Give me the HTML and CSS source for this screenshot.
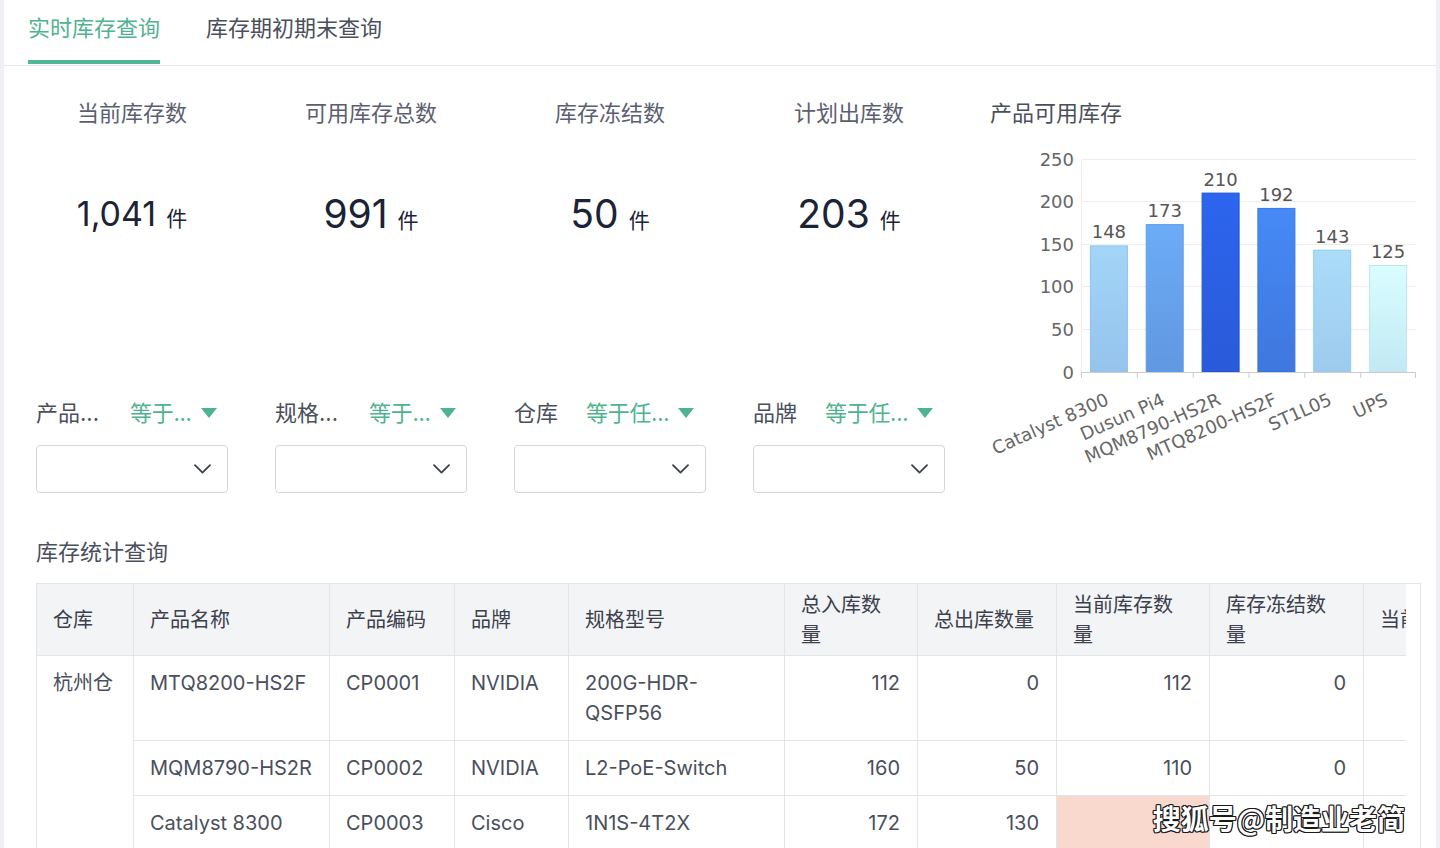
FILE: index.html
```html
<!DOCTYPE html>
<html lang="zh-CN">
<head>
<meta charset="utf-8">
<title>实时库存查询</title>
<link rel="stylesheet" href="styles.css">
</head>
<body>
<div class="page">
  <div class="tabs">
    <div class="tab active">实时库存查询</div>
    <div class="tab">库存期初期末查询</div>
  </div>
  <div class="content">
    <div class="top">
      <div class="left">
        <div class="grid4 kpis">
          <div class="kpi"><div class="kpi-label">当前库存数</div><div class="kpi-value small">1,041<span class="unit">件</span></div></div>
          <div class="kpi"><div class="kpi-label">可用库存总数</div><div class="kpi-value">991<span class="unit">件</span></div></div>
          <div class="kpi"><div class="kpi-label">库存冻结数</div><div class="kpi-value">50<span class="unit">件</span></div></div>
          <div class="kpi"><div class="kpi-label">计划出库数</div><div class="kpi-value">203<span class="unit">件</span></div></div>
        </div>
        <div class="grid4 filters">
          <div class="filter">
            <div class="fhead"><span class="fname">产品...</span><span class="fop">等于...</span><svg class="tri" width="16" height="10" viewBox="0 0 16 10"><path d="M0 0H16L8 10Z" fill="#4fb38f"/></svg></div>
            <div class="select"><svg width="17" height="10" viewBox="0 0 17 10"><path d="M1 1.2L8.5 8.6L16 1.2" fill="none" stroke="#3c4150" stroke-width="1.8" stroke-linecap="round" stroke-linejoin="round"/></svg></div>
          </div>
          <div class="filter">
            <div class="fhead"><span class="fname">规格...</span><span class="fop">等于...</span><svg class="tri" width="16" height="10" viewBox="0 0 16 10"><path d="M0 0H16L8 10Z" fill="#4fb38f"/></svg></div>
            <div class="select"><svg width="17" height="10" viewBox="0 0 17 10"><path d="M1 1.2L8.5 8.6L16 1.2" fill="none" stroke="#3c4150" stroke-width="1.8" stroke-linecap="round" stroke-linejoin="round"/></svg></div>
          </div>
          <div class="filter">
            <div class="fhead"><span class="fname short">仓库</span><span class="fop">等于任...</span><svg class="tri" width="16" height="10" viewBox="0 0 16 10"><path d="M0 0H16L8 10Z" fill="#4fb38f"/></svg></div>
            <div class="select"><svg width="17" height="10" viewBox="0 0 17 10"><path d="M1 1.2L8.5 8.6L16 1.2" fill="none" stroke="#3c4150" stroke-width="1.8" stroke-linecap="round" stroke-linejoin="round"/></svg></div>
          </div>
          <div class="filter">
            <div class="fhead"><span class="fname short">品牌</span><span class="fop">等于任...</span><svg class="tri" width="16" height="10" viewBox="0 0 16 10"><path d="M0 0H16L8 10Z" fill="#4fb38f"/></svg></div>
            <div class="select"><svg width="17" height="10" viewBox="0 0 17 10"><path d="M1 1.2L8.5 8.6L16 1.2" fill="none" stroke="#3c4150" stroke-width="1.8" stroke-linecap="round" stroke-linejoin="round"/></svg></div>
          </div>
        </div>
      </div>
      <div class="chart">
        <div class="chart-title">产品可用库存</div>
        <svg class="chart-svg" width="430" height="340" viewBox="0 0 430 340">
          <defs>
            <linearGradient id="g1" x1="0" y1="0" x2="0" y2="1"><stop offset="0" stop-color="#a3d5f8"/><stop offset="1" stop-color="#95c3ec"/></linearGradient>
            <linearGradient id="g2" x1="0" y1="0" x2="0" y2="1"><stop offset="0" stop-color="#6cabf7"/><stop offset="1" stop-color="#6198e0"/></linearGradient>
            <linearGradient id="g3" x1="0" y1="0" x2="0" y2="1"><stop offset="0" stop-color="#2c65ef"/><stop offset="1" stop-color="#2a5ad8"/></linearGradient>
            <linearGradient id="g4" x1="0" y1="0" x2="0" y2="1"><stop offset="0" stop-color="#468af6"/><stop offset="1" stop-color="#3f77dd"/></linearGradient>
            <linearGradient id="g5" x1="0" y1="0" x2="0" y2="1"><stop offset="0" stop-color="#abdcf9"/><stop offset="1" stop-color="#9dcbee"/></linearGradient>
            <linearGradient id="g6" x1="0" y1="0" x2="0" y2="1"><stop offset="0" stop-color="#d9fdff"/><stop offset="1" stop-color="#c2e9f4"/></linearGradient>
          </defs>
          <g stroke="#ededed" stroke-width="1">
            <line x1="91" y1="19.5" x2="426" y2="19.5"/>
            <line x1="91" y1="61.5" x2="426" y2="61.5"/>
            <line x1="91" y1="104.5" x2="426" y2="104.5"/>
            <line x1="91" y1="146.5" x2="426" y2="146.5"/>
            <line x1="91" y1="189.5" x2="426" y2="189.5"/>
            <line x1="91.5" y1="19" x2="91.5" y2="232"/>
          </g>
          <g class="ylab" text-anchor="end">
            <text x="84" y="25.5">250</text>
            <text x="84" y="68">200</text>
            <text x="84" y="110.7">150</text>
            <text x="84" y="153.3">100</text>
            <text x="84" y="196">50</text>
            <text x="84" y="238.5">0</text>
          </g>
          <rect x="100.4" y="105.9" width="37" height="126.1" fill="url(#g1)" stroke="#8cc3f0" stroke-width="1"/>
          <rect x="156.2" y="84.6" width="37" height="147.4" fill="url(#g2)" stroke="#5b9cf0" stroke-width="1"/>
          <rect x="212.1" y="53.1" width="37" height="178.9" fill="url(#g3)" stroke="#1f52de" stroke-width="1"/>
          <rect x="267.9" y="68.4" width="37" height="163.6" fill="url(#g4)" stroke="#3577e8" stroke-width="1"/>
          <rect x="323.7" y="110.2" width="37" height="121.8" fill="url(#g5)" stroke="#92cbf0" stroke-width="1"/>
          <rect x="379.6" y="125.5" width="37" height="106.5" fill="url(#g6)" stroke="#bde6f2" stroke-width="1"/>
          <g stroke="#cccccc" stroke-width="1">
            <line x1="91" y1="232.5" x2="426" y2="232.5"/>
            <line x1="91.5" y1="232" x2="91.5" y2="238"/>
            <line x1="147.3" y1="232" x2="147.3" y2="238"/>
            <line x1="203.2" y1="232" x2="203.2" y2="238"/>
            <line x1="259" y1="232" x2="259" y2="238"/>
            <line x1="314.8" y1="232" x2="314.8" y2="238"/>
            <line x1="370.7" y1="232" x2="370.7" y2="238"/>
            <line x1="425.5" y1="232" x2="425.5" y2="238"/>
          </g>
          <g class="vlab" text-anchor="middle">
            <text x="118.9" y="98.4">148</text>
            <text x="174.7" y="77.1">173</text>
            <text x="230.6" y="45.6">210</text>
            <text x="286.4" y="60.9">192</text>
            <text x="342.2" y="102.7">143</text>
            <text x="398.1" y="118">125</text>
          </g>
          <g class="xlab" text-anchor="end">
            <text transform="translate(120,264) rotate(-24)">Catalyst 8300</text>
            <text transform="translate(176,264) rotate(-24)">Dusun Pi4</text>
            <text transform="translate(232,264) rotate(-24)">MQM8790-HS2R</text>
            <text transform="translate(288,264) rotate(-24)">MTQ8200-HS2F</text>
            <text transform="translate(343,264) rotate(-24)">ST1L05</text>
            <text transform="translate(399,264) rotate(-24)">UPS</text>
          </g>
        </svg>
      </div>
    </div>
    <div class="section-title">库存统计查询</div>
    <div class="table-wrap">
      <div class="table-clip">
        <table class="stock">
          <thead>
            <tr>
              <th class="c1">仓库</th>
              <th class="c2">产品名称</th>
              <th class="c3">产品编码</th>
              <th class="c4">品牌</th>
              <th class="c5">规格型号</th>
              <th class="c6">总入库数量</th>
              <th class="c7">总出库数量</th>
              <th class="c8">当前库存数量</th>
              <th class="c9">库存冻结数量</th>
              <th class="c10">当前可用库存</th>
            </tr>
          </thead>
          <tbody>
            <tr>
              <td rowspan="3">杭州仓</td>
              <td>MTQ8200-HS2F</td>
              <td>CP0001</td>
              <td>NVIDIA</td>
              <td>200G-HDR-<br>QSFP56</td>
              <td class="num">112</td>
              <td class="num">0</td>
              <td class="num">112</td>
              <td class="num">0</td>
              <td class="num"></td>
            </tr>
            <tr>
              <td>MQM8790-HS2R</td>
              <td>CP0002</td>
              <td>NVIDIA</td>
              <td>L2-PoE-Switch</td>
              <td class="num">160</td>
              <td class="num">50</td>
              <td class="num">110</td>
              <td class="num">0</td>
              <td class="num"></td>
            </tr>
            <tr>
              <td>Catalyst 8300</td>
              <td>CP0003</td>
              <td>Cisco</td>
              <td>1N1S-4T2X</td>
              <td class="num">172</td>
              <td class="num">130</td>
              <td class="num hot"></td>
              <td class="num"></td>
              <td class="num"></td>
            </tr>
          </tbody>
        </table>
      </div>
    </div>
  </div>
  <div class="watermark">搜狐号@制造业老简</div>
</div>
</body>
</html>
```

FILE: styles.css
```css
html, body {
  margin: 0;
  padding: 0;
  height: 848px;
  overflow: hidden;
}

body {
  background: #f0f0f5;
  font-family: Inter, "Noto Sans CJK SC", sans-serif;
  color: #4a4f5c;
}

.page {
  position: relative;
  margin: 0 4px;
  height: 848px;
  background: #ffffff;
  overflow: hidden;
}

/* Tabs */
.tabs {
  display: flex;
  gap: 46px;
  padding-left: 24px;
  height: 65px;
  border-bottom: 1px solid #e7e8ec;
}

.tab {
  box-sizing: border-box;
  height: 64px;
  padding-top: 13px;
  font-size: 22px;
  line-height: 30px;
  color: #4a4f5c;
  border-bottom: 4px solid transparent;
}

.tab.active {
  color: #4fb38f;
  border-bottom-color: #52b594;
}

/* Content */
.content {
  padding: 0 15px 0 32px;
}

.top {
  display: flex;
  margin-top: 32px;
}

.left {
  width: 909px;
}

.grid4 {
  display: grid;
  grid-template-columns: repeat(4, 192px);
  column-gap: 47px;
}

.kpi {
  text-align: center;
}

.kpi-label {
  font-size: 22px;
  line-height: 30px;
  color: #5b6070;
}

.kpi-value {
  margin-top: 62px;
  font-size: 39px;
  line-height: 48px;
  color: #1b2336;
}

.kpi-value.small {
  font-size: 34px;
}

.unit {
  font-size: 21px;
  margin-left: 10px;
}

.filters {
  margin-top: 153px;
}

.fhead {
  display: flex;
  align-items: center;
  font-size: 22px;
  line-height: 30px;
  white-space: nowrap;
}

.fname {
  width: 94px;
  color: #4a4f5c;
}

.fname.short {
  width: 72px;
}

.fop {
  color: #4fb38f;
  letter-spacing: -0.3px;
}

.tri {
  margin-left: 9px;
}

.select {
  box-sizing: border-box;
  margin-top: 17px;
  height: 48px;
  border: 1px solid #d3d6dc;
  border-radius: 4px;
  display: flex;
  align-items: center;
  justify-content: flex-end;
  padding-right: 16px;
}

.select svg {
  display: block;
}

/* Chart */
.chart {
  margin-left: 45px;
  width: 430px;
}

.chart-title {
  font-size: 22px;
  line-height: 30px;
  color: #4a4f5c;
}

.chart-svg {
  display: block;
  margin-top: 12px;
  font-family: "DejaVu Sans", Verdana, sans-serif;
}

.ylab text {
  font-size: 18px;
  fill: #666666;
}

.vlab text {
  font-size: 18px;
  fill: #555555;
}

.xlab text {
  font-size: 18px;
  fill: #666666;
}

/* Table */
.section-title {
  margin-top: 44px;
  font-size: 22px;
  line-height: 30px;
  color: #4a4f5c;
}

.table-wrap {
  margin-top: 16px;
  border: 1px solid #e2e4e8;
  border-bottom: 0;
  padding-right: 14px;
}

.table-clip {
  overflow: hidden;
}

.stock {
  border-collapse: separate;
  border-spacing: 0;
  table-layout: fixed;
  width: 1507px;
  font-size: 20px;
  line-height: 30px;
  color: #4a4f5c;
}

.stock th,
.stock td {
  box-sizing: border-box;
  border-right: 1px solid #e2e4e8;
  border-bottom: 1px solid #e2e4e8;
  padding: 12px 16px;
  text-align: left;
  vertical-align: top;
  font-weight: normal;
}

.stock th {
  background: #f3f4f6;
  padding: 5px 20px 5px 16px;
  vertical-align: middle;
  color: #3b404c;
  height: 72px;
}

.stock .c1 { width: 97px; }
.stock .c2 { width: 196px; }
.stock .c3 { width: 125px; }
.stock .c4 { width: 114px; }
.stock .c5 { width: 216px; }
.stock .c6 { width: 133px; }
.stock .c7 { width: 139px; }
.stock .c8 { width: 153px; }
.stock .c9 { width: 154px; }
.stock .c10 { width: 180px; white-space: nowrap; }

.stock td.num {
  text-align: right;
  padding-right: 17px;
}

.stock td.hot {
  background: #f9d9ce;
}

/* Watermark overlay */
.watermark {
  position: absolute;
  right: 31px;
  top: 799px;
  font-family: "Noto Sans CJK SC", sans-serif;
  font-size: 28px;
  line-height: 38px;
  font-weight: 700;
  color: #ffffff;
  text-shadow:
    1px 0 0 #1a1a1a, -1px 0 0 #1a1a1a, 0 1px 0 #1a1a1a, 0 -1px 0 #1a1a1a,
    1px 1px 0 #1a1a1a, -1px -1px 0 #1a1a1a, 1px -1px 0 #1a1a1a, -1px 1px 0 #1a1a1a;
}
```
